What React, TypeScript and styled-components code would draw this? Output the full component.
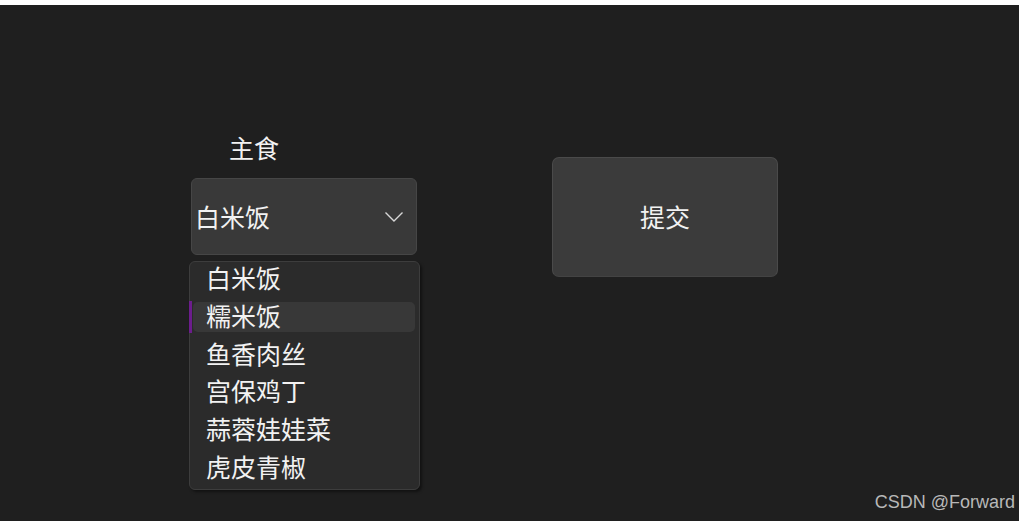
import React from "react";
import styled, { createGlobalStyle } from "styled-components";

const GlobalStyle = createGlobalStyle`
  html, body {
    margin: 0;
    padding: 0;
    background: #ffffff;
  }
  body {
    font-family: "Noto Sans CJK SC", "Microsoft YaHei", sans-serif;
  }
`;

const dishes = ["白米饭", "糯米饭", "鱼香肉丝", "宫保鸡丁", "蒜蓉娃娃菜", "虎皮青椒"];

export default function App() {
  return <>
    <GlobalStyle />
    <Window>
      <Content>
        <Field>
          <Label>主食</Label>
          <Combo>
            <ComboText>白米饭</ComboText>
            <Chevron />
            <Popup>
              {dishes.map(d => (
                <Item key={d} $active={d === "糯米饭"}>
                  {d === "糯米饭" ? <ActiveMark /> : null}
                  <ItemText>{d}</ItemText>
                </Item>
              ))}
            </Popup>
          </Combo>
        </Field>
        <SubmitButton>提交</SubmitButton>
      </Content>
      <Watermark>CSDN @Forward</Watermark>
    </Window>
  </>;
}

const Chevron = () => (
  <ChevronSvg viewBox="0 0 20 12" width="20" height="12">
    <polyline points="1.5,1.5 10,10 18.5,1.5" fill="none" stroke="#d8d8d8" strokeWidth="1.4" />
  </ChevronSvg>
);

const Window = styled.div`
  margin-top: 5px;
  width: 1019px;
  height: 516px;
  background: #1f1f1f;
  display: flex;
  flex-direction: column;
`;

const Content = styled.div`
  display: flex;
  align-items: flex-start;
  padding: 129px 0 0 189px;
  gap: 132px;
`;

const Field = styled.div`
  width: 231px;
  display: flex;
  flex-direction: column;
`;

const Label = styled.div`
  padding-left: 40px;
  height: 30px;
  line-height: 26px;
  font-size: 25px;
  color: #f2f2f2;
`;

const Combo = styled.div`
  position: relative;
  margin: 14px 0 0 2px;
  width: 226px;
  height: 77px;
  box-sizing: border-box;
  background: #393939;
  border: 1px solid #464646;
  border-radius: 6px;
  display: flex;
  align-items: center;
  justify-content: space-between;
  padding: 0 12px 0 3px;
`;

const ComboText = styled.span`
  font-size: 25px;
  color: #f2f2f2;
  padding-bottom: 2px;
`;

const ChevronSvg = styled.svg`
  display: block;
`;

const Popup = styled.div`
  position: absolute;
  top: 82px;
  left: -3px;
  width: 231px;
  height: 229px;
  box-sizing: border-box;
  background: #2b2b2b;
  border: 1px solid #3d3d3d;
  border-radius: 6px;
  box-shadow: 2px 2px 3px rgba(0, 0, 0, 0.45);
  display: flex;
  flex-direction: column;
`;

const Item = styled.div<{ $active?: boolean }>`
  position: relative;
  flex: 0 0 37.8px;
  min-height: 0;
  box-sizing: border-box;
  display: flex;
  align-items: flex-start;
  padding: 0 4px;
  &::before {
    content: "";
    position: absolute;
    left: 3px;
    right: 4px;
    top: 2px;
    bottom: 6px;
    border-radius: 5px;
    background: ${p => (p.$active ? "#383838" : "transparent")};
  }
`;

const ActiveMark = styled.span`
  position: absolute;
  left: -1px;
  top: 1px;
  width: 3px;
  height: 32px;
  background: #6c1d8c;
`;

const ItemText = styled.span`
  position: relative;
  padding-left: 12px;
  font-size: 25px;
  line-height: 30px;
  color: #f2f2f2;
`;

const SubmitButton = styled.button`
  margin-top: 23px;
  width: 226px;
  height: 120px;
  background: #3b3b3b;
  border: 1px solid #4a4a4a;
  border-bottom-color: #434343;
  border-radius: 7px;
  color: #f2f2f2;
  font-family: "Noto Sans CJK SC", sans-serif;
  font-size: 25px;
  padding: 0 0 3px;
`;

const Watermark = styled.div`
  margin-top: auto;
  align-self: flex-end;
  padding: 0 4px 8px 0;
  font-family: "Liberation Sans", Arial, sans-serif;
  font-size: 18px;
  color: #b8b8b8;
`;
